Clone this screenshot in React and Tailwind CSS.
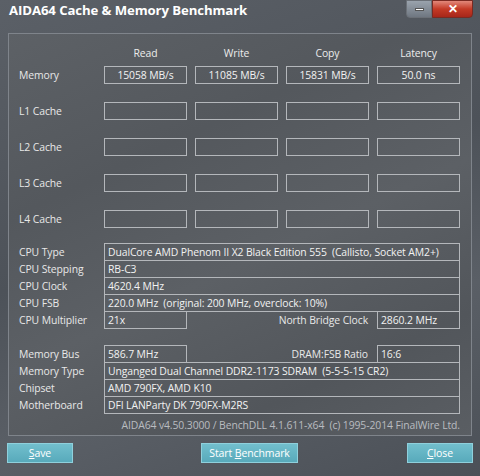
import React from 'react';

const font = { fontFamily: '"Open Sans", "Noto Sans", sans-serif' };

const cols = ['Read', 'Write', 'Copy', 'Latency'];

const benchRows = [
  { label: 'Memory', values: ['15058 MB/s', '11085 MB/s', '15831 MB/s', '50.0 ns'] },
  { label: 'L1 Cache', values: ['', '', '', ''] },
  { label: 'L2 Cache', values: ['', '', '', ''] },
  { label: 'L3 Cache', values: ['', '', '', ''] },
  { label: 'L4 Cache', values: ['', '', '', ''], disabled: true },
];

const Box = ({ children, className = '' }) => (
  <div className={`h-[18px] border border-[#b4b7bb] flex items-center px-[3px] whitespace-nowrap overflow-hidden text-[#f2f2f2] ${className}`}>
    {children}
  </div>
);

const Label = ({ children, className = '' }) => (
  <div className={`w-[85px] shrink-0 whitespace-nowrap text-[#e8e8e8] ${className}`}>{children}</div>
);

const Btn = ({ children, className = '' }) => (
  <button className={`h-[20px] border border-[#8fd0dc] bg-[linear-gradient(#72bfcd,#58aabb)] text-white text-[10.5px] leading-none flex items-center justify-center ${className}`}>
    {children}
  </button>
);

export default function App() {
  return (
    <div
      className="w-[480px] h-[476px] overflow-hidden text-[10.4px] tracking-[-0.1px] leading-none flex flex-col bg-[linear-gradient(160deg,#5b6067_0%,#4d5259_45%,#5a5f66_70%,#4b5057_100%)]"
      style={font}
    >
      {/* title bar */}
      <div className="h-[33px] shrink-0 flex items-start justify-between">
        <div className="pl-[9px] pt-[4px] text-[13.2px] font-bold text-white tracking-[-0.1px]">
          AIDA64 Cache &amp; Memory Benchmark
        </div>
        <div className="flex mr-[7px]">
          <div className="w-[26px] h-[18px] border border-[#6b7077] rounded-bl-[4px] bg-[linear-gradient(#9aa3ad,#6f7781)] flex items-center justify-center">
            <div className="w-[9px] h-[3px] bg-white border border-[#555]" />
          </div>
          <div className="w-[41px] h-[18px] border border-[#7a2a22] rounded-br-[4px] bg-[linear-gradient(#e2887a,#c43a26_50%,#a8261a)] flex items-center justify-center text-white font-bold text-[12px]">
            ✕
          </div>
        </div>
      </div>

      {/* main panel */}
      <div className="mx-[8px] h-[403px] shrink-0 border border-[#7f848b] bg-[linear-gradient(155deg,#5d6166_0%,#54585d_30%,#5c6065_55%,#52565b_80%,#5a5e63_100%)] pl-[10px] pr-[11px] pt-[12px] flex flex-col">
        {/* headers */}
        <div className="flex h-[14px] items-center">
          <Label />
          <div className="flex gap-[8px]">
            {cols.map((c) => (
              <div key={c} className="w-[83px] text-center text-[#ececec]">{c}</div>
            ))}
          </div>
        </div>

        <div className="mt-[6px] flex flex-col gap-[18px]">
          {benchRows.map((r) => (
            <div key={r.label} className="flex items-center h-[18px]">
              <Label className={r.disabled ? 'text-[#8e9297]' : ''}>{r.label}</Label>
              <div className="flex gap-[8px]">
                {r.values.map((v, i) => (
                  <Box key={i} className="w-[83px] justify-center">{v}</Box>
                ))}
              </div>
            </div>
          ))}
        </div>

        {/* CPU block */}
        <div className="mt-[15px] flex flex-col">
          <div className="flex items-center">
            <Label>CPU Type</Label>
            <Box className="flex-1">DualCore AMD Phenom II X2 Black Edition 555&nbsp; (Callisto, Socket AM2+)</Box>
          </div>
          <div className="flex items-center -mt-px">
            <Label>CPU Stepping</Label>
            <Box className="flex-1">RB-C3</Box>
          </div>
          <div className="flex items-center -mt-px">
            <Label>CPU Clock</Label>
            <Box className="flex-1">4620.4 MHz</Box>
          </div>
          <div className="flex items-center -mt-px">
            <Label>CPU FSB</Label>
            <Box className="flex-1">220.0 MHz&nbsp; (original: 200 MHz, overclock: 10%)</Box>
          </div>
          <div className="flex items-center -mt-px">
            <Label>CPU Multiplier</Label>
            <Box className="w-[83px]">21x</Box>
            <div className="flex-1 text-right pr-[9px] text-[#e8e8e8]">North Bridge Clock</div>
            <Box className="w-[83px]">2860.2 MHz</Box>
          </div>
        </div>

        {/* memory block */}
        <div className="mt-[16px] flex flex-col">
          <div className="flex items-center">
            <Label>Memory Bus</Label>
            <Box className="w-[83px]">586.7 MHz</Box>
            <div className="flex-1 text-right pr-[9px] text-[#e8e8e8]">DRAM:FSB Ratio</div>
            <Box className="w-[83px]">16:6</Box>
          </div>
          <div className="flex items-center -mt-px">
            <Label>Memory Type</Label>
            <Box className="flex-1">Unganged Dual Channel DDR2-1173 SDRAM&nbsp; (5-5-5-15 CR2)</Box>
          </div>
          <div className="flex items-center -mt-px">
            <Label>Chipset</Label>
            <Box className="flex-1">AMD 790FX, AMD K10</Box>
          </div>
          <div className="flex items-center -mt-px">
            <Label>Motherboard</Label>
            <Box className="flex-1">DFI LANParty DK 790FX-M2RS</Box>
          </div>
        </div>

        <div className="mt-[6px] text-right text-[#b9bcc0]">
          AIDA64 v4.50.3000 / BenchDLL 4.1.611-x64&nbsp; (c) 1995-2014 FinalWire Ltd.
        </div>
      </div>

      {/* buttons */}
      <div className="mt-[7px] px-[7px] flex items-center justify-between">
        <Btn className="w-[66px]"><span><u>S</u>ave</span></Btn>
        <Btn className="w-[97px] ml-[19px]"><span>Start <u>B</u>enchmark</span></Btn>
        <Btn className="w-[66px]"><span><u>C</u>lose</span></Btn>
      </div>
    </div>
  );
}
